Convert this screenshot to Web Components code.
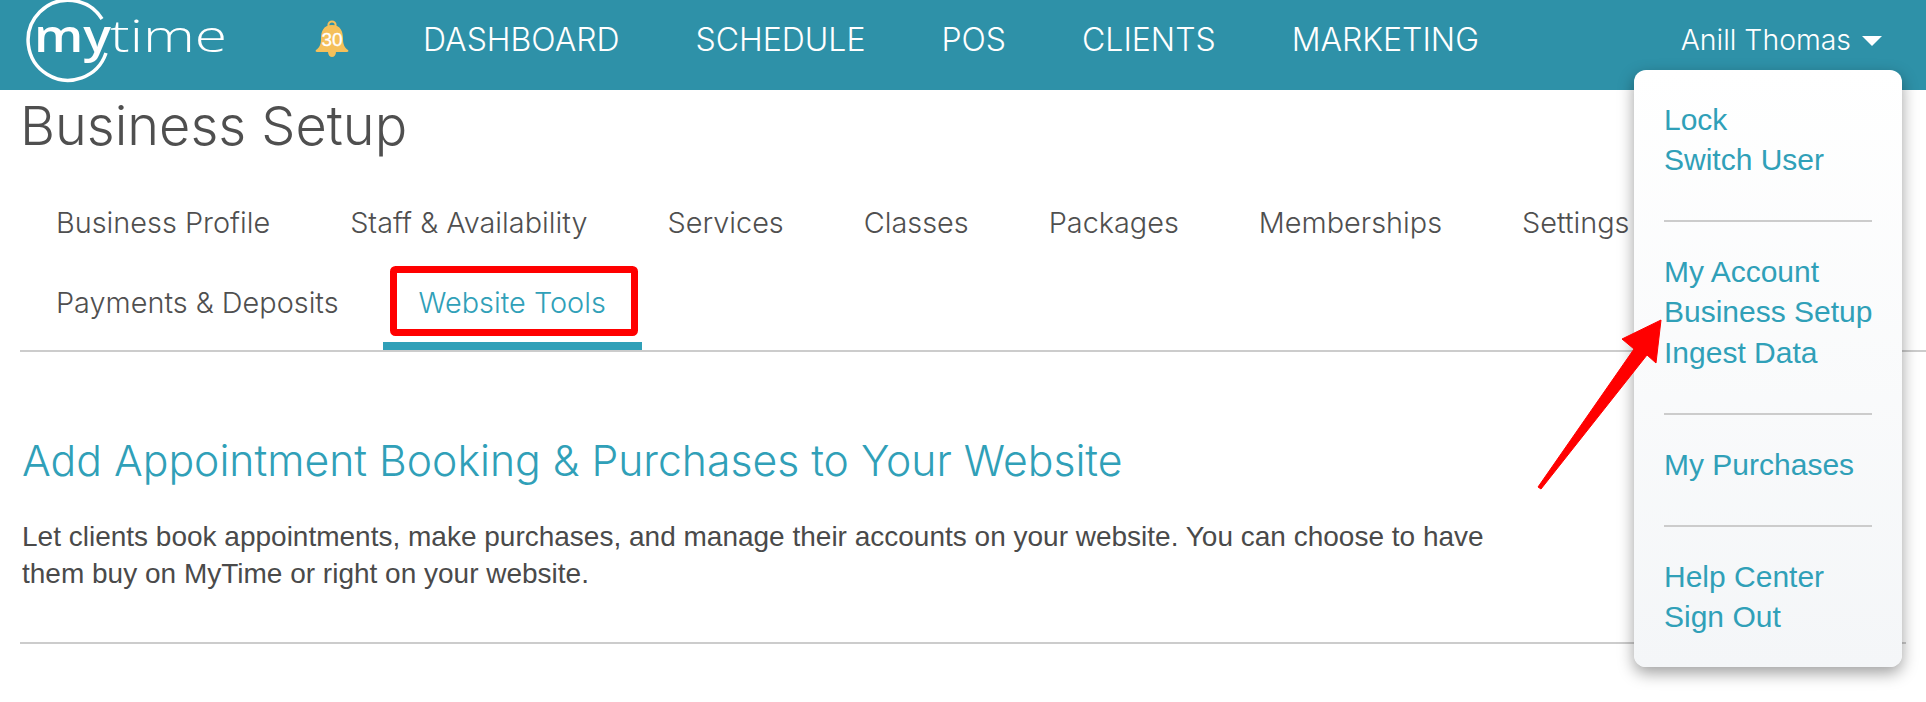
<!doctype html>
<html>
<head>
<meta charset="utf-8">
<title>Business Setup</title>
<style>
  html, body { margin: 0; height: 702px; overflow: hidden; background: #fff; }
  body { position: relative; font-family: "Liberation Sans", Arial, sans-serif; color: #4a4a4a; }
</style>
</head>
<body>
<mt-header>
  <mt-logo></mt-logo>
  <mt-bell count="30"></mt-bell>
  <mt-nav-link>DASHBOARD</mt-nav-link>
  <mt-nav-link>SCHEDULE</mt-nav-link>
  <mt-nav-link>POS</mt-nav-link>
  <mt-nav-link>CLIENTS</mt-nav-link>
  <mt-nav-link>MARKETING</mt-nav-link>
  <mt-user slot="user">Anill Thomas</mt-user>
</mt-header>

<mt-page title="Business Setup">
  <mt-tabs>
    <mt-tab>Business Profile</mt-tab>
    <mt-tab>Staff &amp; Availability</mt-tab>
    <mt-tab>Services</mt-tab>
    <mt-tab>Classes</mt-tab>
    <mt-tab>Packages</mt-tab>
    <mt-tab>Memberships</mt-tab>
    <mt-tab>Settings</mt-tab>
    <mt-tab>Payments &amp; Deposits</mt-tab>
    <mt-tab active>Website Tools</mt-tab>
  </mt-tabs>
  <mt-section heading="Add Appointment Booking &amp; Purchases to Your Website">
    Let clients book appointments, make purchases, and manage their accounts on your website. You can choose to have<br>them buy on MyTime or right on your website.
  </mt-section>
</mt-page>

<mt-user-menu>
  <mt-menu-group>
    <a>Lock</a>
    <a>Switch User</a>
  </mt-menu-group>
  <mt-menu-group>
    <a>My Account</a>
    <a>Business Setup</a>
    <a>Ingest Data</a>
  </mt-menu-group>
  <mt-menu-group>
    <a>My Purchases</a>
  </mt-menu-group>
  <mt-menu-group>
    <a>Help Center</a>
    <a>Sign Out</a>
  </mt-menu-group>
</mt-user-menu>

<mt-annotations></mt-annotations>

<script>
const LIGHT_FONT = `Inter, "Liberation Sans", sans-serif`

class BaseElement extends HTMLElement {
  constructor(html) {
    super()
    this.attachShadow({ mode: 'open' })
    const template = document.createElement('template')
    template.innerHTML = html
    this.shadowRoot.appendChild(template.content.cloneNode(true))
  }
}

class MtHeader extends BaseElement {
  constructor() {
    super(/*HTML*/ `
      <style>
        :host {
          display: block;
          height: 90px;
          background-color: #2e91a8;
        }
        .bar {
          display: flex;
          align-items: center;
          height: 100%;
          padding-right: 44px;
        }
        nav {
          display: flex;
          align-items: center;
          gap: 76px;
        }
        .user {
          margin-left: auto;
          margin-bottom: 10px;
        }
      </style>
      <div class="bar">
        <nav><slot></slot></nav>
        <div class="user"><slot name="user"></slot></div>
      </div>
    `)
  }
}

class MtLogo extends BaseElement {
  constructor() {
    super(/*HTML*/ `
      <style>
        :host {
          display: block;
          width: 300px;
          height: 90px;
          margin-right: -76px;
        }
        svg { display: block; }
        text { font-family: "Open Sans", sans-serif; fill: #fff; }
      </style>
      <svg width="240" height="90" viewBox="0 0 240 90">
        <path d="M102 19 A40 40 0 1 0 106 53" fill="none" stroke="#fff" stroke-width="3.5"/>
        <text x="34" y="52" font-size="45" font-weight="600" textLength="77" lengthAdjust="spacingAndGlyphs">my</text>
        <text x="110" y="52" font-size="45" font-weight="300" textLength="117" lengthAdjust="spacingAndGlyphs">time</text>
      </svg>
    `)
  }
}

class MtBell extends BaseElement {
  constructor() {
    super(/*HTML*/ `
      <style>
        :host {
          display: block;
          position: relative;
          width: 34px;
          height: 38px;
          margin: 0 -2px 12px 15px;
        }
        svg { display: block; }
        span {
          position: absolute;
          left: 0;
          right: 0;
          top: 9px;
          text-align: center;
          color: #fff;
          font: 19px/22px "Liberation Sans", sans-serif;
          -webkit-text-stroke: .3px #fff;
        }
      </style>
      <svg width="34" height="38" viewBox="0 0 34 38">
        <circle cx="17" cy="5" r="3.6" fill="none" stroke="#f5c05a" stroke-width="2"/>
        <path d="M17 5C8 5 6 12 6 19c0 6-2 9-5 11-1 1 0 2 1 2h30c1 0 2-1 1-2-3-2-5-5-5-11 0-7-2-14-11-14z" fill="#f5c05a"/>
        <path d="M13 32h8c0 3-2 5-4 5s-4-2-4-5z" fill="#f5c05a"/>
      </svg>
      <span></span>
    `)
    this.shadowRoot.querySelector('span').textContent = this.getAttribute('count')
  }
}

class MtNavLink extends BaseElement {
  constructor() {
    super(/*HTML*/ `
      <style>
        :host {
          display: block;
          margin-bottom: 10px;
          color: #fff;
          font: 300 32px/36px ${LIGHT_FONT};
        }
      </style>
      <slot></slot>
    `)
  }
}

class MtUser extends BaseElement {
  constructor() {
    super(/*HTML*/ `
      <style>
        :host {
          display: flex;
          align-items: center;
          gap: 11px;
          color: #fff;
          font: 300 28.4px/36px ${LIGHT_FONT};
        }
        i {
          border-top: 10px solid #fff;
          border-left: 10px solid transparent;
          border-right: 10px solid transparent;
          margin-top: 2px;
        }
      </style>
      <slot></slot><i></i>
    `)
  }
}

class MtPage extends BaseElement {
  constructor() {
    super(/*HTML*/ `
      <style>
        :host {
          display: block;
          padding-left: 20px;
        }
        h1 {
          margin: 0;
          font: 300 54px/72px ${LIGHT_FONT};
          color: #4f4f4f;
        }
      </style>
      <h1></h1>
      <slot></slot>
    `)
    this.shadowRoot.querySelector('h1').textContent = this.getAttribute('title')
  }
}

class MtTabs extends BaseElement {
  constructor() {
    super(/*HTML*/ `
      <style>
        :host {
          display: flex;
          flex-wrap: wrap;
          gap: 0 8px;
          margin-top: 20px;
          padding-right: 20px;
          padding-bottom: 8px;
          border-bottom: 2px solid #ccc;
        }
      </style>
      <slot></slot>
    `)
  }
}

class MtTab extends BaseElement {
  constructor() {
    super(/*HTML*/ `
      <style>
        :host {
          display: block;
          box-sizing: border-box;
          height: 88px;
          margin-bottom: -8px;
          padding: 21px 36px 0;
          color: #4f4f4f;
          font: 300 28.85px/40px ${LIGHT_FONT};
        }
        :host([active]) {
          color: #30a0b8;
          border-bottom: 8px solid #30a0b8;
        }
      </style>
      <slot></slot>
    `)
  }
}

class MtSection extends BaseElement {
  constructor() {
    super(/*HTML*/ `
      <style>
        :host {
          display: block;
          margin-right: 20px;
          padding: 78px 2px 50px;
          border-bottom: 2px solid #ccc;
        }
        h2 {
          margin: 0 0 27px;
          color: #30a0b8;
          font: 300 42.7px/62px ${LIGHT_FONT};
        }
        p {
          margin: 0;
          color: #4a4a4a;
          font: 28px/36.5px "Liberation Sans", sans-serif;
        }
      </style>
      <h2></h2>
      <p><slot></slot></p>
    `)
    this.shadowRoot.querySelector('h2').textContent = this.getAttribute('heading')
  }
}

class MtUserMenu extends BaseElement {
  constructor() {
    super(/*HTML*/ `
      <style>
        :host {
          position: absolute;
          left: 1634px;
          top: 70px;
          width: 268px;
          height: 597px;
          box-sizing: border-box;
          padding: 30px 30px 0;
          border-radius: 12px;
          background: linear-gradient(#fff, #f4f6f8);
          box-shadow: 0 6px 16px rgba(0, 0, 0, .38);
        }
      </style>
      <slot></slot>
    `)
  }
}

class MtMenuGroup extends BaseElement {
  constructor() {
    super(/*HTML*/ `
      <style>
        :host {
          display: block;
          padding: 0 0 40px;
          margin-bottom: 30px;
          border-bottom: 2px solid #ccc;
        }
        :host(:last-child) {
          border-bottom: none;
        }
        ::slotted(a) {
          display: block;
          color: #30a0b8;
          font: 30px/40.15px "Liberation Sans", sans-serif;
          white-space: nowrap;
        }
      </style>
      <slot></slot>
    `)
  }
}

// red markup drawn over the screenshot
class MtAnnotations extends BaseElement {
  constructor() {
    super(/*HTML*/ `
      <style>
        :host {
          position: absolute;
          inset: 0;
          pointer-events: none;
        }
        svg { display: block; }
      </style>
      <svg width="1926" height="702" viewBox="0 0 1926 702">
        <rect x="393.5" y="269.5" width="241" height="63" rx="2" fill="none" stroke="#ff0000" stroke-width="7"/>
        <path d="M1661 320 L1622 339 L1634 349 L1538 487 L1541 489 L1647 355 L1656 363 Z" fill="#ff0000" stroke="#ff0000" stroke-linejoin="round"/>
      </svg>
    `)
  }
}

customElements.define('mt-header', MtHeader)
customElements.define('mt-logo', MtLogo)
customElements.define('mt-bell', MtBell)
customElements.define('mt-nav-link', MtNavLink)
customElements.define('mt-user', MtUser)
customElements.define('mt-page', MtPage)
customElements.define('mt-tabs', MtTabs)
customElements.define('mt-tab', MtTab)
customElements.define('mt-section', MtSection)
customElements.define('mt-user-menu', MtUserMenu)
customElements.define('mt-menu-group', MtMenuGroup)
customElements.define('mt-annotations', MtAnnotations)
</script>
</body>
</html>
